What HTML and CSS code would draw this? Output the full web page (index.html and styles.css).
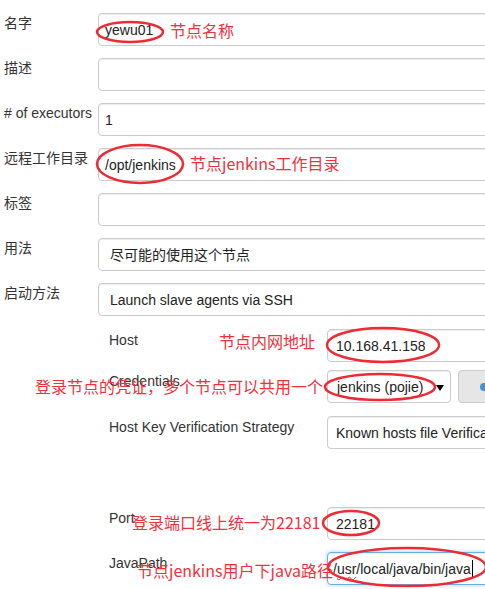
FILE: index.html
```html
<!DOCTYPE html>
<html>
<head>
<meta charset="utf-8">
<link rel="stylesheet" href="styles.css">
</head>
<body>
<div class="page">
  <div class="form">
    <div class="row"><div class="label">名字</div><div class="field">yewu01</div></div>
    <div class="row"><div class="label">描述</div><div class="field"></div></div>
    <div class="row"><div class="label"># of executors</div><div class="field">1</div></div>
    <div class="row"><div class="label">远程工作目录</div><div class="field">/opt/jenkins</div></div>
    <div class="row"><div class="label">标签</div><div class="field"></div></div>
    <div class="row"><div class="label">用法</div><div class="field dropdown">尽可能的使用这个节点</div></div>
    <div class="row">
      <div class="label">启动方法</div>
      <div class="control">
        <div class="field dropdown">Launch slave agents via SSH</div>
        <div class="sub">
          <div class="subrow host"><div class="sublabel">Host</div><div class="field wide">10.168.41.158</div></div>
          <div class="subrow cred"><div class="sublabel">Credentials</div>
            <div class="credwrap">
              <div class="field select">jenkins (pojie)<span class="arrow"></span></div>
              <div class="addbtn"><span class="keydot"></span></div>
            </div>
          </div>
          <div class="subrow hostkey"><div class="sublabel">Host Key Verification Strategy</div><div class="field wide">Known hosts file Verification Strategy</div></div>
          <div class="subrow port"><div class="sublabel">Port</div><div class="field wide">22181</div></div>
          <div class="subrow java"><div class="sublabel">JavaPath</div><div class="field wide focus">/<span class="spell">usr</span>/local/java/bin/java<span class="caret"></span></div></div>
        </div>
      </div>
    </div>
  </div>

  <svg class="marks" width="485" height="589" viewBox="0 0 485 589">
    <g fill="none" stroke="#ee2a35" stroke-width="2.5">
      <ellipse cx="130" cy="32" rx="33" ry="10"/>
      <ellipse cx="140" cy="164" rx="43" ry="19"/>
      <ellipse cx="383" cy="345" rx="56" ry="17"/>
      <ellipse cx="380" cy="387" rx="55" ry="13"/>
      <ellipse cx="351" cy="523" rx="28" ry="12"/>
      <ellipse cx="407" cy="567" rx="79" ry="19"/>
    </g>
  </svg>

  <div class="note n1">节点名称</div>
  <div class="note n2">节点jenkins工作目录</div>
  <div class="note n3">节点内网地址</div>
  <div class="note n4">登录节点的凭证，多个节点可以共用一个</div>
  <div class="note n5">登录端口线上统一为22181</div>
  <div class="note n6">节点jenkins用户下java路径</div>
</div>
</body>
</html>
```

FILE: styles.css
```css
html, body {
  margin: 0;
  padding: 0;
  overflow: hidden;
  background: #fff;
}

.page {
  position: relative;
  width: 485px;
  height: 589px;
  overflow: hidden;
  font-family: "Liberation Sans", "Noto Sans CJK SC", sans-serif;
  font-size: 14px;
  color: #333;
}

.form {
  padding: 13px 0 0 4px;
  display: flex;
  flex-direction: column;
  gap: 12px;
}

.row {
  display: grid;
  grid-template-columns: 94px 420px;
  align-items: start;
}

.label {
  line-height: 20px;
  white-space: nowrap;
}

.field {
  box-sizing: border-box;
  height: 33px;
  border: 1px solid #ccc;
  border-radius: 4px;
  box-shadow: inset 0 1px 1px rgba(0, 0, 0, 0.075);
  padding: 0 6px;
  display: flex;
  align-items: center;
  line-height: 20px;
  white-space: nowrap;
  color: #222;
  background: #fff;
  position: relative;
}

.field.dropdown {
  padding-left: 11px;
}

.control {
  display: flex;
  flex-direction: column;
}

.sub {
  padding-left: 11px;
  display: flex;
  flex-direction: column;
}

.subrow {
  display: grid;
  grid-template-columns: 218px 220px;
  align-items: start;
}

.sublabel {
  line-height: 20px;
  padding-top: 1px;
  white-space: nowrap;
}

.host { margin-top: 13px; }
.cred { margin-top: 8px; }
.hostkey { margin-top: 13px; }
.port { margin-top: 58px; }
.java { margin-top: 12px; }

.field.wide {
  width: 220px;
  padding-left: 8px;
}

.credwrap {
  display: flex;
  gap: 7px;
}

.field.select {
  width: 124px;
  padding-left: 9px;
}

.arrow {
  position: absolute;
  right: 6px;
  top: 14px;
  width: 0;
  height: 0;
  border-left: 4px solid transparent;
  border-right: 4px solid transparent;
  border-top: 6px solid #000;
}

.addbtn {
  box-sizing: border-box;
  width: 60px;
  height: 33px;
  border: 1px solid #ccc;
  border-radius: 4px;
  background: #e6e6e6;
  position: relative;
}

.keydot {
  position: absolute;
  left: 21px;
  top: 12px;
  width: 8px;
  height: 8px;
  border-radius: 50%;
  background: #4a8fd0;
}

.field.focus {
  border-color: #66afe9;
  box-shadow: inset 0 1px 1px rgba(0, 0, 0, 0.075), 0 0 4px rgba(102, 175, 233, 0.6);
  padding-left: 5px;
}

.spell {
  text-decoration: underline wavy #e33;
  text-decoration-thickness: 1px;
  text-underline-offset: 2px;
}

.caret {
  display: inline-block;
  width: 1px;
  height: 17px;
  background: #000;
  margin-left: 1px;
}

.marks {
  position: absolute;
  left: 0;
  top: 0;
  pointer-events: none;
}

.note {
  position: absolute;
  font-family: "Microsoft YaHei", "Noto Sans CJK SC", sans-serif;
  font-size: 16px;
  line-height: 16px;
  color: #f0313c;
  white-space: nowrap;
}

.n1 { left: 170px; top: 22px; }
.n2 { left: 190px; top: 155px; }
.n3 { left: 219px; top: 333px; }
.n4 { left: 35px; top: 378px; }
.n5 { left: 132px; top: 514px; }
.n6 { left: 137px; top: 562px; }
```
